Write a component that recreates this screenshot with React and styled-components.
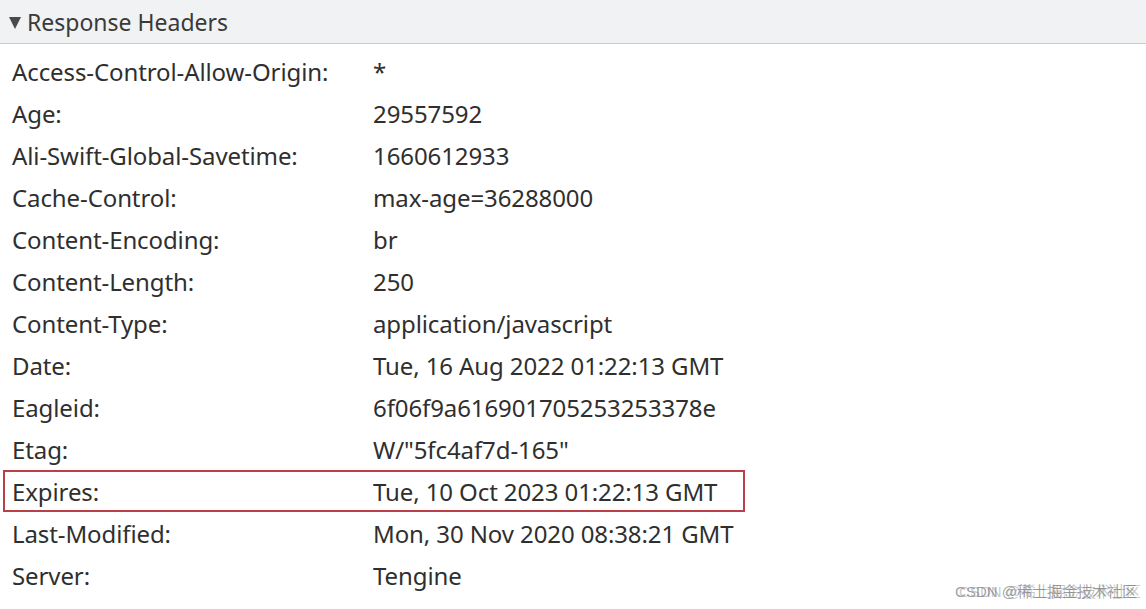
import styled, { createGlobalStyle } from "styled-components";

const GlobalStyle = createGlobalStyle`
  html, body {
    margin: 0;
    padding: 0;
    background: #ffffff;
  }
  body {
    font-family: "Noto Sans", "Open Sans", "Noto Sans CJK SC", sans-serif;
    color: #333333;
    overflow: hidden;
  }
`;

const Page = styled.div`
  position: relative;
  width: 1146px;
  height: 609px;
  overflow: hidden;
  background: #ffffff;
`;

const SectionHeader = styled.div`
  display: flex;
  align-items: center;
  gap: 6px;
  height: 43px;
  padding-left: 9px;
  background: #f1f2f4;
  border-bottom: 1px solid #c9ccd1;
  font-size: 23px;
  color: #3a3a3a;
`;

const Caret = styled.span`
  width: 0;
  height: 0;
  border-left: 6.5px solid transparent;
  border-right: 6.5px solid transparent;
  border-top: 12px solid #4a4a4a;
  margin-top: 2px;
`;

const HeaderList = styled.div`
  display: flex;
  flex-direction: column;
  padding-top: 6px;
`;

const Row = styled.div`
  display: grid;
  grid-template-columns: 361px auto;
  align-items: center;
  height: 42px;
  padding-left: 12px;
  font-size: 24px;
  letter-spacing: -0.1px;
  white-space: nowrap;
  ${({ $marked }) =>
    $marked &&
    `
    width: 733px;
    margin-left: 3px;
    padding-left: 9px;
    box-shadow: inset 0 0 0 2px #b94049;
  `}
`;

const Key = styled.span`
  color: #2f2f2f;
`;

const Value = styled.span`
  color: #2f2f2f;
`;

const Watermark = styled.div`
  position: absolute;
  right: 9px;
  bottom: 8px;
  font-size: 15px;
  color: rgba(120, 120, 120, 0.7);
  text-shadow: 4px 0 0 rgba(130, 130, 130, 0.45);
  font-family: "Liberation Sans", "Noto Sans CJK SC", sans-serif;
  white-space: nowrap;
`;

const headers = [
  ["Access-Control-Allow-Origin:", "*"],
  ["Age:", "29557592"],
  ["Ali-Swift-Global-Savetime:", "1660612933"],
  ["Cache-Control:", "max-age=36288000"],
  ["Content-Encoding:", "br"],
  ["Content-Length:", "250"],
  ["Content-Type:", "application/javascript"],
  ["Date:", "Tue, 16 Aug 2022 01:22:13 GMT"],
  ["Eagleid:", "6f06f9a616901705253253378e"],
  ["Etag:", 'W/"5fc4af7d-165"'],
  ["Expires:", "Tue, 10 Oct 2023 01:22:13 GMT"],
  ["Last-Modified:", "Mon, 30 Nov 2020 08:38:21 GMT"],
  ["Server:", "Tengine"],
  ["Server-Timing:", "cdn-cache;desc=HIT, edge;dur=1"],
];

export default function App() {
  return (
    <Page>
      <GlobalStyle />
      <SectionHeader>
        <Caret />
        Response Headers
      </SectionHeader>
      <HeaderList>
        {headers.map(([key, value]) => (
          <Row key={key} $marked={key === "Expires:"}>
            <Key>{key}</Key>
            <Value>{value}</Value>
          </Row>
        ))}
      </HeaderList>
      <Watermark>CSDN @稀土掘金技术社区</Watermark>
    </Page>
  );
}
